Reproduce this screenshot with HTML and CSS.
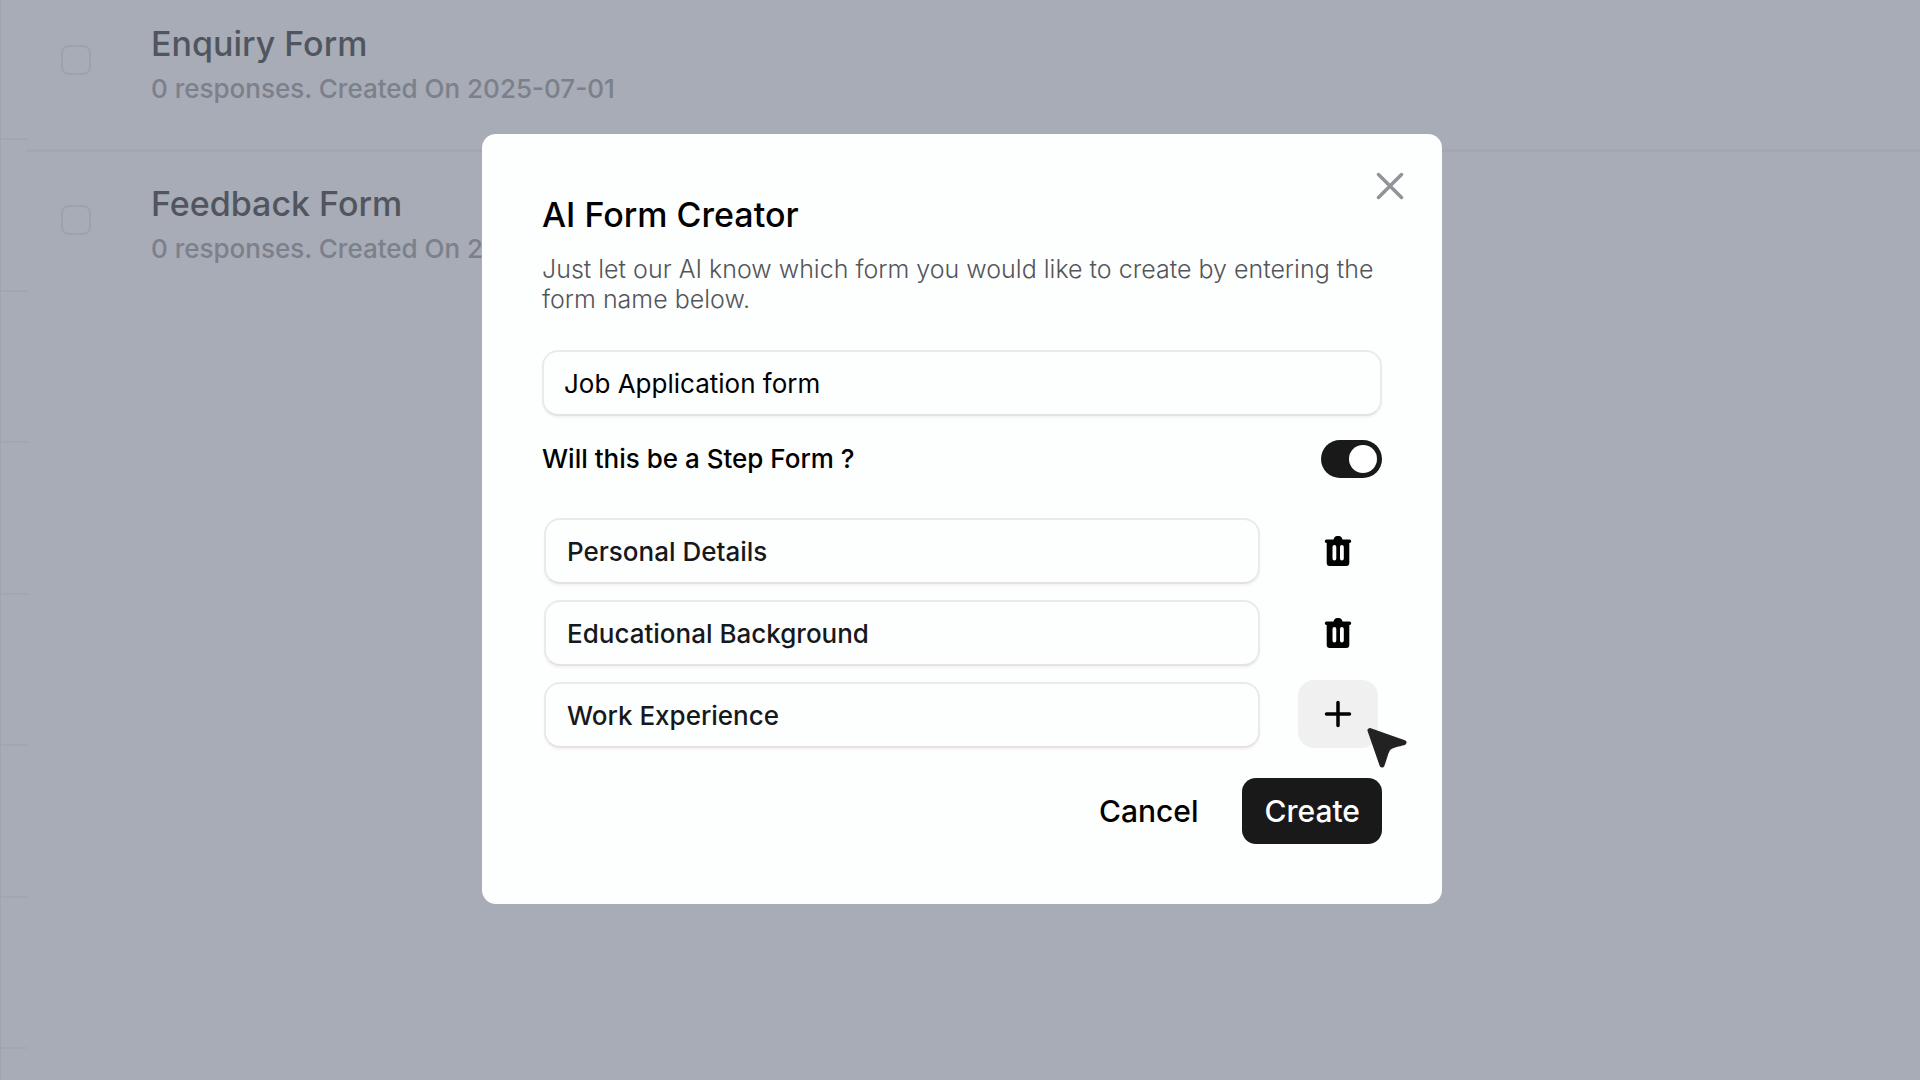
FILE: index.html
```html
<!DOCTYPE html>
<html lang="en">
<head>
<meta charset="utf-8">
<meta name="viewport" content="width=device-width, initial-scale=1">
<title>AI Form Creator</title>
<link rel="stylesheet" href="styles.css">
</head>
<body>
<div class="page">
  <div class="rail" aria-hidden="true">
    <div class="rail-cell rail-first"></div>
    <div class="rail-cell"></div>
    <div class="rail-cell"></div>
    <div class="rail-cell"></div>
    <div class="rail-cell"></div>
    <div class="rail-cell"></div>
    <div class="rail-cell"></div>
  </div>
  <main class="forms">
    <div class="form-row">
      <input class="check" type="checkbox" id="form-enquiry">
      <div class="form-info">
        <label class="form-name" for="form-enquiry">Enquiry Form</label>
        <p class="form-meta">0 responses. Created On 2025-07-01</p>
      </div>
    </div>
    <div class="form-row">
      <input class="check" type="checkbox" id="form-feedback">
      <div class="form-info">
        <label class="form-name" for="form-feedback">Feedback Form</label>
        <p class="form-meta">0 responses. Created On 2025-07-01</p>
      </div>
    </div>
  </main>
</div>

<div class="overlay">
  <form class="dialog" role="dialog" aria-labelledby="dialog-title">
    <button class="close" type="button" aria-label="Close">
      <svg width="28" height="28" viewBox="0 0 28 28" fill="none" stroke="currentColor" stroke-width="3.500" stroke-linecap="round"><path d="M2.500 2.500 25.500 25.500M25.500 2.500 2.500 25.500"/></svg>
    </button>
    <h1 class="title" id="dialog-title">AI Form Creator</h1>
    <p class="description">Just let our AI know which form you would like to create by entering the form name below.</p>
    <input class="field" type="text" aria-label="Form name" value="Job Application form">
    <div class="step-toggle">
      <label class="step-label" for="step-form">Will this be a Step Form ?</label>
      <input class="switch" type="checkbox" role="switch" id="step-form" checked>
    </div>
    <div class="steps">
      <div class="step">
        <input class="field" type="text" aria-label="Step 1" value="Personal Details">
        <button class="icon-button" type="button" aria-label="Delete step 1">
          <svg width="28" height="32" viewBox="0 0 28 32"><path fill="currentColor" fill-rule="evenodd" d="M9.500 4.500C10 2.200 11.500 1 13 1h2c1.500 0 3 1.200 3.500 3.500H25.500a1.750 1.750 0 0 1 0 3.500H25.300V28a3 3 0 0 1-3 3H5.700a3 3 0 0 1-3-3V8H2.500a1.750 1.750 0 0 1 0-3.500ZM8.500 12v11.500a1.900 1.900 0 0 0 3.800 0V12a1.900 1.900 0 0 0-3.800 0ZM16 12v11.500a1.900 1.900 0 0 0 3.800 0V12a1.900 1.900 0 0 0-3.800 0Z"/></svg>
        </button>
      </div>
      <div class="step">
        <input class="field" type="text" aria-label="Step 2" value="Educational Background">
        <button class="icon-button" type="button" aria-label="Delete step 2">
          <svg width="28" height="32" viewBox="0 0 28 32"><path fill="currentColor" fill-rule="evenodd" d="M9.500 4.500C10 2.200 11.500 1 13 1h2c1.500 0 3 1.200 3.500 3.500H25.500a1.750 1.750 0 0 1 0 3.500H25.300V28a3 3 0 0 1-3 3H5.700a3 3 0 0 1-3-3V8H2.500a1.750 1.750 0 0 1 0-3.500ZM8.500 12v11.500a1.900 1.900 0 0 0 3.800 0V12a1.900 1.900 0 0 0-3.800 0ZM16 12v11.500a1.900 1.900 0 0 0 3.800 0V12a1.900 1.900 0 0 0-3.800 0Z"/></svg>
        </button>
      </div>
      <div class="step">
        <input class="field" type="text" aria-label="Step 3" value="Work Experience">
        <button class="icon-button add" type="button" aria-label="Add step">
          <svg width="28" height="28" viewBox="0 0 28 28" fill="none" stroke="currentColor" stroke-width="3.500" stroke-linecap="round"><path d="M14 2.500v23M2.500 14h23"/></svg>
          <svg class="cursor" width="42" height="42" viewBox="0 0 42 42"><path d="M4 3.500 38 15.500C30 18 24 18 21.500 22.500 19 27 18.500 32 16 38Z" fill="#222" stroke="#222" stroke-width="5" stroke-linejoin="round"/></svg>
        </button>
      </div>
    </div>
    <div class="actions">
      <button class="button" type="button">Cancel</button>
      <button class="button primary" type="submit">Create</button>
    </div>
  </form>
</div>
</body>
</html>
```
FILE: styles.css
```css
* {
  box-sizing: border-box;
}

body {
  margin: 0;
  background: #a7acb6;
  color: #000;
  font-family: Inter, "Liberation Sans", sans-serif;
  overflow: hidden;
}

h1,
p {
  margin: 0;
}

input,
button {
  margin: 0;
  font: inherit;
  color: inherit;
}

.page {
  display: flex;
  height: 100vh;
  overflow: hidden;
}

.rail {
  flex: none;
  width: 27px;
  border-left: 1px solid #9fa4af;
}

.rail-cell {
  height: 152px;
  border-bottom: 2px solid #a1a6b2;
}

.rail-cell:nth-child(odd) {
  height: 151px;
}

.rail .rail-first {
  height: 140px;
}

.forms {
  flex: 1;
}

.form-row {
  display: flex;
  gap: 60px;
  height: 160px;
  padding: 31px 34px 0;
}

.form-row:first-child {
  height: 152px;
  padding-top: 23px;
  border-bottom: 3px solid #a2a7b3;
}

.check {
  appearance: none;
  flex: none;
  width: 30px;
  height: 30px;
  margin-top: 22px;
  border: 2px solid #9da2ad;
  border-radius: 8px;
}

.form-info {
  display: flex;
  flex-direction: column;
  gap: 7px;
}

.form-name {
  font-size: 34px;
  font-weight: 450;
  line-height: 42px;
  color: #50555f;
}

.form-meta {
  font-size: 26px;
  font-weight: 500;
  line-height: 34px;
  color: #7b808a;
}

.overlay {
  position: fixed;
  inset: 0;
  display: flex;
  align-items: center;
  justify-content: center;
  padding: 0 0 42px 4px;
}

.dialog {
  position: relative;
  display: flex;
  flex-direction: column;
  width: 960px;
  max-width: 100%;
  padding: 60px;
  border-radius: 14px;
  background: #fdfefe;
}

.close {
  position: absolute;
  top: 38px;
  right: 38px;
  display: flex;
  padding: 0;
  border: 0;
  background: none;
  color: #929399;
}

.title {
  font-size: 34px;
  font-weight: 450;
  line-height: 42px;
}

.description {
  margin-top: 18px;
  font-size: 25px;
  font-weight: 300;
  line-height: 30px;
  color: #545559;
}

.field {
  min-width: 0;
  height: 66px;
  padding: 0 20px;
  border: 2px solid #ebe9eb;
  border-bottom-color: #e4e2e4;
  border-radius: 16px;
  background: #fdfefe;
  box-shadow: 0 2px 2px #f5f3f4;
  font-size: 26px;
}

.description + .field {
  margin-top: 36px;
}

.step-toggle {
  display: flex;
  align-items: center;
  justify-content: space-between;
  margin-top: 24px;
}

.step-label {
  font-size: 26px;
  font-weight: 500;
  line-height: 38px;
}

.switch {
  appearance: none;
  display: flex;
  align-items: center;
  justify-content: flex-end;
  width: 61px;
  height: 38px;
  padding: 0 5px;
  border-radius: 19px;
  background: #19191a;
}

.switch::before {
  content: "";
  width: 28px;
  height: 28px;
  border-radius: 50%;
  background: #fff;
}

.steps {
  display: flex;
  flex-direction: column;
  gap: 16px;
  margin-top: 40px;
  padding: 0 4px 0 2px;
  color: #17181c;
}

.step {
  display: flex;
  align-items: center;
  gap: 38px;
}

.step .field {
  flex: 1;
  padding: 0 21px;
  font-weight: 450;
}

.icon-button {
  position: relative;
  display: flex;
  align-items: center;
  justify-content: center;
  flex: none;
  width: 80px;
  height: 66px;
  padding: 0;
  border: 0;
  border-radius: 16px;
  background: none;
  color: #000;
}

.add {
  height: 68px;
  margin: -2px 0 0;
  background: #f0f0f1;
}

.cursor {
  position: absolute;
  top: 47px;
  left: 68px;
}

.actions {
  display: flex;
  justify-content: flex-end;
  gap: 22px;
  margin-top: 30px;
}

.button {
  height: 66px;
  padding: 0 22px;
  border: 0;
  border-radius: 14px;
  background: none;
  font-size: 30px;
  font-weight: 500;
}

.primary {
  background: #19191a;
  color: #fff;
}
```
